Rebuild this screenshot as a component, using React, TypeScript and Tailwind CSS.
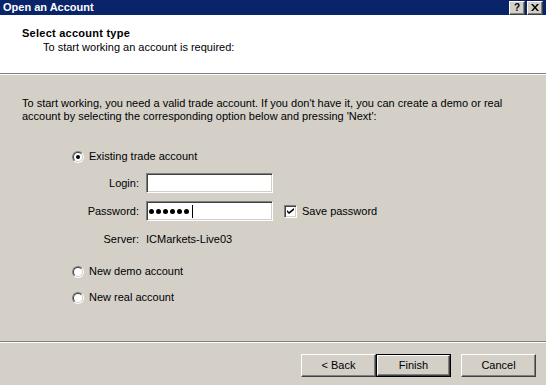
import React from "react";

const raised =
  "border border-t-white border-l-white border-r-[#404040] border-b-[#404040] shadow-[inset_-1px_-1px_#808080]";
const sunken =
  "border border-t-[#808080] border-l-[#808080] border-r-white border-b-white shadow-[inset_1px_1px_#404040,inset_-1px_-1px_#d4d0c8]";

function Radio({ checked }: { checked?: boolean }) {
  return (
    <span className="w-[12px] h-[12px] rounded-full border border-t-[#808080] border-l-[#808080] border-r-white border-b-white shrink-0 flex">
      <span className="flex-1 rounded-full border border-t-[#404040] border-l-[#404040] border-r-[#d4d0c8] border-b-[#d4d0c8] bg-white flex items-center justify-center">
        {checked && <span className="w-[4px] h-[4px] rounded-full bg-black" />}
      </span>
    </span>
  );
}

function RadioRow({ label, checked, className }: { label: string; checked?: boolean; className?: string }) {
  return (
    <div className={`flex items-center h-[13px] pl-[72px] gap-[5px] ${className ?? ""}`}>
      <Radio checked={checked} />
      <span>{label}</span>
    </div>
  );
}

function Button({ label, isDefault }: { label: string; isDefault?: boolean }) {
  if (isDefault) {
    return (
      <div className="w-[75px] h-[23px] border border-black flex">
        <div className={`flex-1 flex items-center justify-center ${raised}`}>{label}</div>
      </div>
    );
  }
  return <div className={`w-[75px] h-[23px] flex items-center justify-center ${raised}`}>{label}</div>;
}

export default function App() {
  return (
    <div
      className="w-[546px] h-[385px] bg-[#d4d0c8] text-black text-[11px] leading-[13px] flex flex-col overflow-hidden"
      style={{ fontFamily: '"Liberation Sans", Arial, sans-serif' }}
    >
      {/* title bar */}
      <div className="h-[15px] bg-[#0a246a] flex items-center pl-[3px] pr-[3px]">
        <span className="text-white font-bold text-[11px]">Open an Account</span>
        <div className="ml-auto flex gap-[2px]">
          <div className={`w-[16px] h-[14px] bg-[#d4d0c8] flex items-center justify-center font-bold text-[10px] leading-none ${raised}`}>
            ?
          </div>
          <div className={`w-[16px] h-[14px] bg-[#d4d0c8] flex items-center justify-center ${raised}`}>
            <svg width="8" height="7" viewBox="0 0 8 7">
              <path d="M0 0h2l2 2.5L6 0h2L5 3.5 8 7H6L4 4.5 2 7H0l3-3.5z" fill="#000" />
            </svg>
          </div>
        </div>
      </div>

      {/* header */}
      <div className="h-[58px] bg-white pt-[12px]">
        <div className="pl-[22px] font-bold tracking-[0.25px]">Select account type</div>
        <div className="pl-[43px] mt-[1px]">To start working an account is required:</div>
      </div>
      <div className="h-[2px] border-t border-t-[#808080] border-b border-b-white" />

      {/* body */}
      <div className="flex-1 flex flex-col">
        <p className="pl-[22px] pt-[22px]">
          To start working, you need a valid trade account. If you don't have it, you can create a demo or real
          <br />
          account by selecting the corresponding option below and pressing 'Next':
        </p>

        <RadioRow label="Existing trade account" checked className="mt-[27px]" />

        <div className="flex items-center h-[20px] mt-[10px]">
          <span className="w-[139px] text-right">Login:</span>
          <div className={`ml-[7px] w-[127px] h-[20px] bg-white ${sunken}`} />
        </div>

        <div className="flex items-center h-[20px] mt-[8px]">
          <span className="w-[139px] text-right">Password:</span>
          <div className={`ml-[7px] w-[127px] h-[20px] bg-white flex items-center pl-[2px] gap-[2px] ${sunken}`}>
            {[0, 1, 2, 3, 4, 5].map((i) => (
              <span key={i} className="w-[5px] h-[5px] rounded-full bg-black" />
            ))}
            <span className="w-[1px] h-[13px] bg-black ml-[1px]" />
          </div>
          <div className={`ml-[11px] w-[13px] h-[13px] bg-white flex items-center justify-center ${sunken}`}>
            <svg width="7" height="7" viewBox="0 0 7 7">
              <path d="M0 2l2 2 5-4v2L2 6 0 4z" fill="#000" />
            </svg>
          </div>
          <span className="ml-[5px]">Save password</span>
        </div>

        <div className="flex items-center h-[13px] mt-[12px]">
          <span className="w-[139px] text-right">Server:</span>
          <span className="ml-[7px]">ICMarkets-Live03</span>
        </div>

        <RadioRow label="New demo account" className="mt-[19px]" />
        <RadioRow label="New real account" className="mt-[13px]" />

        {/* footer */}
        <div className="mt-auto">
          <div className="h-[2px] border-t border-t-[#808080] border-b border-b-white" />
          <div className="flex justify-end pt-[11px] pb-[8px] pr-[10px]">
            <Button label="< Back" />
            <Button label="Finish" isDefault />
            <div className="ml-[10px]">
              <Button label="Cancel" />
            </div>
          </div>
        </div>
      </div>
    </div>
  );
}
